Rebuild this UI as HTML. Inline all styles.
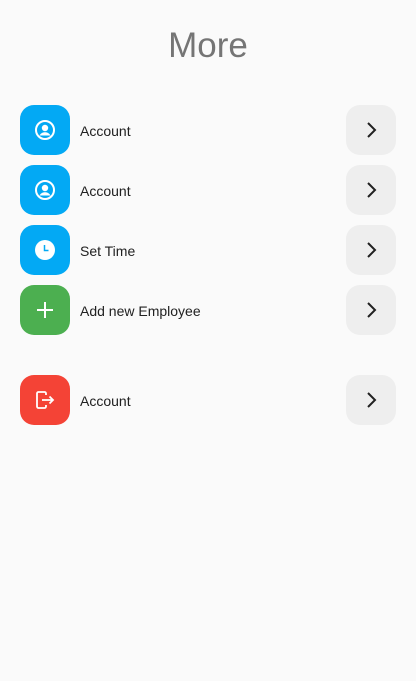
<!DOCTYPE html>
<html><head><style>
body{margin:0;width:416px;height:681px;background:#fafafa;font-family:"Liberation Sans",sans-serif;position:relative;overflow:hidden}
h1{position:absolute;top:24px;left:0;width:416px;text-align:center;margin:0;font-weight:normal;font-size:35px;color:#757575;line-height:44px}
.row{position:absolute;left:20px;width:376px;height:50px}
.ic{position:absolute;left:0;top:0;width:50px;height:50px;border-radius:14px;display:flex;align-items:center;justify-content:center}
.lb{position:absolute;left:60px;top:1px;line-height:50px;font-size:14px;color:#212121}
.bt{position:absolute;right:0;top:0;width:50px;height:50px;border-radius:14px;background:#eeeeee;display:flex;align-items:center;justify-content:center}
.b{background:#03a9f4}.g{background:#4caf50}.r{background:#f44336}
</style></head><body>
<h1>More</h1>
<div class="row" style="top:105px"><div class="ic b"><svg width="22" height="22" viewBox="0 0 22 22"><circle cx="11" cy="11" r="9" fill="none" stroke="#fff" stroke-width="2"/><circle cx="11" cy="9" r="3.2" fill="#fff"/><path d="M5.5 16.5c1.5-2.5 3.5-3.2 5.5-3.2s4 .7 5.5 3.2" fill="#fff"/></svg></div><div class="lb">Account</div><div class="bt"><svg width="14" height="16" viewBox="0 0 14 16"><path d="M4 1l7 7-7 7" fill="none" stroke="#212121" stroke-width="2"/></svg></div></div>
<div class="row" style="top:165px"><div class="ic b"><svg width="22" height="22" viewBox="0 0 22 22"><circle cx="11" cy="11" r="9" fill="none" stroke="#fff" stroke-width="2"/><circle cx="11" cy="9" r="3.2" fill="#fff"/><path d="M5.5 16.5c1.5-2.5 3.5-3.2 5.5-3.2s4 .7 5.5 3.2" fill="#fff"/></svg></div><div class="lb">Account</div><div class="bt"><svg width="14" height="16" viewBox="0 0 14 16"><path d="M4 1l7 7-7 7" fill="none" stroke="#212121" stroke-width="2"/></svg></div></div>
<div class="row" style="top:225px"><div class="ic b"><svg width="22" height="22" viewBox="0 0 22 22"><circle cx="11" cy="11" r="10" fill="#fff"/><path d="M10.5 6v5.5h4" fill="none" stroke="#03a9f4" stroke-width="1.5"/></svg></div><div class="lb">Set Time</div><div class="bt"><svg width="14" height="16" viewBox="0 0 14 16"><path d="M4 1l7 7-7 7" fill="none" stroke="#212121" stroke-width="2"/></svg></div></div>
<div class="row" style="top:285px"><div class="ic g"><svg width="18" height="18" viewBox="0 0 18 18"><path d="M9 1v16M1 9h16" stroke="#fff" stroke-width="2"/></svg></div><div class="lb">Add new Employee</div><div class="bt"><svg width="14" height="16" viewBox="0 0 14 16"><path d="M4 1l7 7-7 7" fill="none" stroke="#212121" stroke-width="2"/></svg></div></div>
<div class="row" style="top:375px"><div class="ic r"><svg width="22" height="22" viewBox="0 0 22 22"><path d="M12 6V4.5A1.5 1.5 0 0 0 10.5 3h-6A1.5 1.5 0 0 0 3 4.5v13A1.5 1.5 0 0 0 4.5 19h6a1.5 1.5 0 0 0 1.5-1.5V16" fill="none" stroke="#fff" stroke-width="1.8"/><path d="M8 11h11M15.5 7.5L19 11l-3.5 3.5" fill="none" stroke="#fff" stroke-width="1.8"/></svg></div><div class="lb">Account</div><div class="bt"><svg width="14" height="16" viewBox="0 0 14 16"><path d="M4 1l7 7-7 7" fill="none" stroke="#212121" stroke-width="2"/></svg></div></div>
</body></html>
